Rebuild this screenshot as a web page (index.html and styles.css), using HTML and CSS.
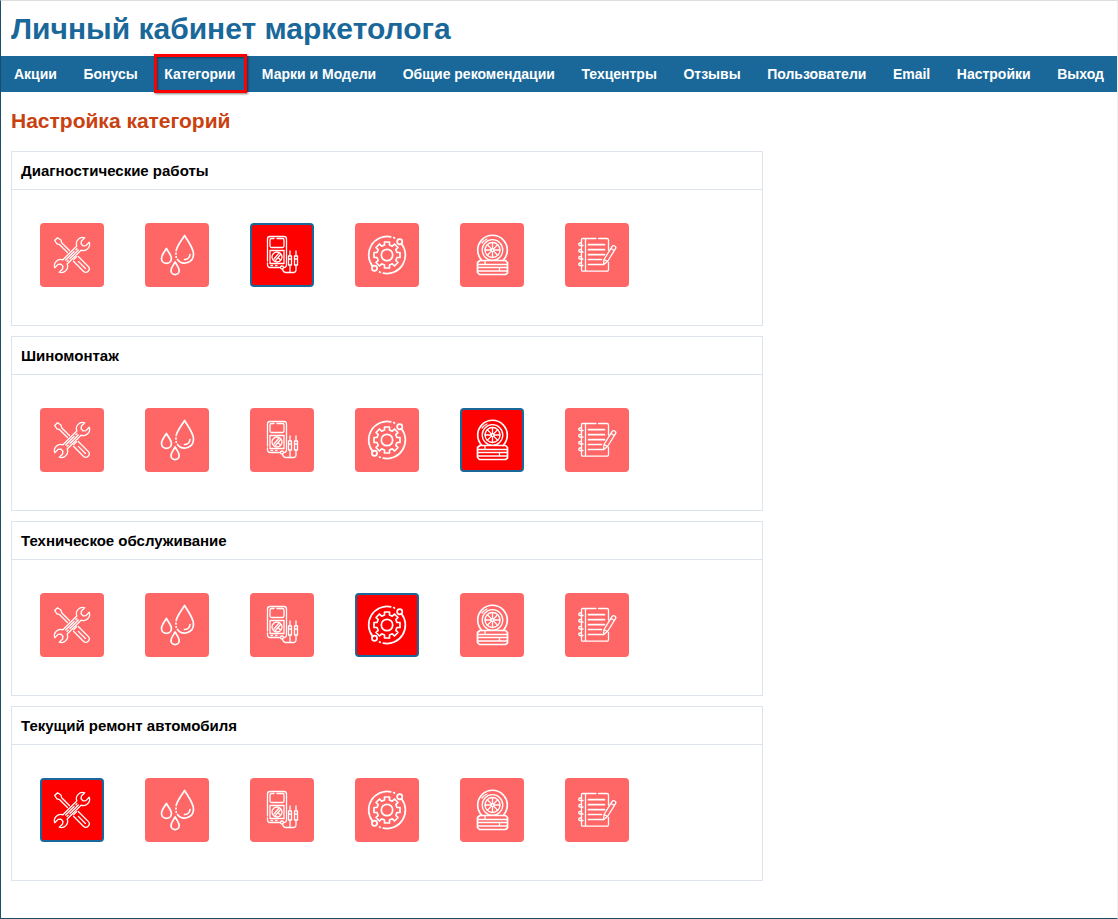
FILE: index.html
```
<!DOCTYPE html>
<html lang="ru">
<head>
<meta charset="utf-8">
<title>Личный кабинет маркетолога</title>
<link rel="stylesheet" href="styles.css">
</head>
<body>
<svg class="sprite" aria-hidden="true">
  <symbol id="tools" viewBox="0 0 64 64">
    <g transform="translate(32 32) rotate(-45)">
      <path d="M-1.400-5V-16L-2.800-18.500L-2-22.500H2L2.800-18.500L1.400-16V-5M-3.400 5.500V19.500A3.400 3.400 0 0 0 3.400 19.500V5.500M-2 4.500H2M0 9V19"/>
    </g>
    <g transform="translate(32 32) rotate(45)">
      <path d="M3-9.800A6.300 6.300 0 0 0 3.200-21.200V-16.500L1.500-14.300H-1.500L-3.200-16.500V-21.200A6.300 6.300 0 0 0-3-9.800V9.800A6.300 6.300 0 0 0-3.200 21.200V16.500L-1.500 14.300H1.500L3.200 16.500V21.200A6.300 6.300 0 0 0 3 9.800Z"/>
      <path d="M-1-8V-6.500M-1-4V8M1-8V4M1 6.500V8"/>
    </g>
  </symbol>
  <symbol id="drops" viewBox="0 0 64 64">
    <g class="bold">
      <path d="M31.200 27.500C32.200 22.500 36.500 17.500 39.600 12.500C43.200 18.500 48.500 25 48.500 31A8.900 8.900 0 0 1 32.500 36.500M31 30V31M31.200 33.500V34.200M45 31.500A5.500 5.500 0 0 1 39.500 36.500"/>
      <path d="M21.400 25.500C19.500 29 16.500 32 16.500 35.400A4.900 4.900 0 0 0 26.400 35.400C26.400 32 23.300 29 21.400 25.500ZM30.100 39C28.500 42 26 44.500 26 47.500A4.100 4.100 0 0 0 34.200 47.500C34.200 44.500 31.700 42 30.100 39Z"/>
    </g>
  </symbol>
  <symbol id="meter" viewBox="0 0 64 64">
    <path d="M17.500 38V16A2.500 2.500 0 0 1 20 13.500H34A2.500 2.500 0 0 1 36.500 16V42A2.500 2.500 0 0 1 34 44.500M30 44.500H20A2.500 2.500 0 0 1 17.500 42V40"/>
    <path d="M27 15.500H32.500A1.500 1.500 0 0 1 34 17V23A1.500 1.500 0 0 1 32.500 24.500H21.500A1.500 1.500 0 0 1 20 23V17A1.500 1.500 0 0 1 21.500 15.500H24M20 27.500H34V40.500H20Z"/>
    <circle cx="27" cy="34" r="5"/>
    <path d="M24 36L29 30M25.500 37.500L30.500 31.500M28.500 35L30.500 37M21 42.500H22.500M25.500 42.500H27"/>
    <circle cx="32" cy="44.500" r="1.500"/>
    <path d="M32.500 46C33 48.500 34 49.500 36 49.500H43.500A2.500 2.500 0 0 0 46 47V42.500M40 49.500V42.500"/>
    <path d="M40 28V33M38.500 33H41.500V42H38.500ZM46 28V33M44.500 33H47.500V42H44.500ZM38.500 36H41.500M44.500 36H47.500"/>
  </symbol>
  <symbol id="gear" viewBox="0 0 64 64">
    <g class="bold">
      <circle cx="32" cy="32" r="5.700"/>
      <path d="M29.500 19H34.500V22L37.300 23.200L39.500 21L43 24.500L40.800 26.700L42 29.500H45V34.500H42L40.800 37.300L43 39.500L39.500 43L37.300 40.800L34.500 42V45H29.500V42L26.700 40.800L24.500 43L21 39.500L23.200 37.300L22 34.500H19V29.500H22L23.200 26.700L21 24.500L24.500 21L26.700 23.200L29.500 22Z"/>
      <circle cx="44.700" cy="18.700" r="2.600"/>
      <circle cx="19.500" cy="45.300" r="2.600"/>
      <path d="M35.700 13.800A18.500 18.500 0 0 0 17.800 43.600M46.500 20.700A18.500 18.500 0 0 1 28.300 50.200M38.700 14.600L39.500 15M24.500 49L25.300 49.300"/>
    </g>
  </symbol>
  <symbol id="tires" viewBox="0 0 64 64">
    <path class="bold" d="M22 37.500A14.800 14.800 0 1 1 43 37.500"/>
    <circle cx="32.500" cy="27" r="10.300"/>
    <circle cx="32.500" cy="27" r="7.500"/>
    <circle cx="32.500" cy="27" r="1.500"/>
    <path d="M32.500 25.500V19.500M32.500 28.500V34.500M31 27H25M34 27H40M31.400 25.900L27.300 21.800M33.600 28.100L37.700 32.200M33.600 25.900L37.700 21.800M31.400 28.100L27.300 32.200M22 20A12.500 12.500 0 0 1 27 16"/>
    <path class="bold" d="M20 37.500H45.500L47.500 39.500V50L45.500 51.500H19.500L17.500 49.500V39.500Z"/>
    <path d="M18 41.500H47M18 44.500H47M18 48H47M25 38V41M39.500 45V48"/>
  </symbol>
  <symbol id="notebook" viewBox="0 0 64 64">
    <path d="M31 15.500H17.500A1 1 0 0 0 16.500 16.500V47A1.200 1.200 0 0 0 17.700 48.200H42A1.500 1.500 0 0 0 43.500 46.700V39.500M43.500 27V17A1.500 1.500 0 0 0 42 15.500H33.500M20.500 15.500V48"/>
    <path d="M18 22.500H15A1.200 1.200 0 0 1 15 20H16.500M18 29H15A1.200 1.200 0 0 1 15 26.500H16.500M18 36H15A1.200 1.200 0 0 1 15 33.500H16.500M18 42.500H15A1.200 1.200 0 0 1 15 40H16.500"/>
    <path class="bold" d="M23.500 21.700H39.500M23.500 26.700H39.500M23.500 31.700H39.500M23.500 36.500H36.500M23.500 41.500H37.500"/>
    <path d="M38.500 41.700L39 36.500L47 23.700A2 2 0 0 1 50.500 25.700L42.500 38.500ZM39 36.500L42.500 38.500M46 25.500L49.300 27.500"/>
  </symbol>
</svg>

<div class="page">
  <header>
    <h1 class="title">Личный кабинет маркетолога</h1>
    <nav class="nav">
      <a href="#">Акции</a>
      <a href="#">Бонусы</a>
      <a href="#" class="current" aria-current="page">Категории</a>
      <a href="#">Марки и Модели</a>
      <a href="#">Общие рекомендации</a>
      <a href="#">Техцентры</a>
      <a href="#">Отзывы</a>
      <a href="#">Пользователи</a>
      <a href="#">Email</a>
      <a href="#">Настройки</a>
      <a href="#">Выход</a>
    </nav>
  </header>
  <main class="content">
    <h2 class="subtitle">Настройка категорий</h2>
    <section class="card">
      <h3 class="card-title">Диагностические работы</h3>
      <div class="icons">
        <button class="tile" aria-label="Инструменты"><svg><use href="#tools"/></svg></button>
        <button class="tile" aria-label="Жидкости"><svg><use href="#drops"/></svg></button>
        <button class="tile selected" aria-label="Тестер" aria-pressed="true"><svg><use href="#meter"/></svg></button>
        <button class="tile" aria-label="Шестерня"><svg><use href="#gear"/></svg></button>
        <button class="tile" aria-label="Шины"><svg><use href="#tires"/></svg></button>
        <button class="tile" aria-label="Блокнот"><svg><use href="#notebook"/></svg></button>
      </div>
    </section>
    <section class="card">
      <h3 class="card-title">Шиномонтаж</h3>
      <div class="icons">
        <button class="tile" aria-label="Инструменты"><svg><use href="#tools"/></svg></button>
        <button class="tile" aria-label="Жидкости"><svg><use href="#drops"/></svg></button>
        <button class="tile" aria-label="Тестер"><svg><use href="#meter"/></svg></button>
        <button class="tile" aria-label="Шестерня"><svg><use href="#gear"/></svg></button>
        <button class="tile selected" aria-label="Шины" aria-pressed="true"><svg><use href="#tires"/></svg></button>
        <button class="tile" aria-label="Блокнот"><svg><use href="#notebook"/></svg></button>
      </div>
    </section>
    <section class="card">
      <h3 class="card-title">Техническое обслуживание</h3>
      <div class="icons">
        <button class="tile" aria-label="Инструменты"><svg><use href="#tools"/></svg></button>
        <button class="tile" aria-label="Жидкости"><svg><use href="#drops"/></svg></button>
        <button class="tile" aria-label="Тестер"><svg><use href="#meter"/></svg></button>
        <button class="tile selected" aria-label="Шестерня" aria-pressed="true"><svg><use href="#gear"/></svg></button>
        <button class="tile" aria-label="Шины"><svg><use href="#tires"/></svg></button>
        <button class="tile" aria-label="Блокнот"><svg><use href="#notebook"/></svg></button>
      </div>
    </section>
    <section class="card">
      <h3 class="card-title">Текущий ремонт автомобиля</h3>
      <div class="icons">
        <button class="tile selected" aria-label="Инструменты" aria-pressed="true"><svg><use href="#tools"/></svg></button>
        <button class="tile" aria-label="Жидкости"><svg><use href="#drops"/></svg></button>
        <button class="tile" aria-label="Тестер"><svg><use href="#meter"/></svg></button>
        <button class="tile" aria-label="Шестерня"><svg><use href="#gear"/></svg></button>
        <button class="tile" aria-label="Шины"><svg><use href="#tires"/></svg></button>
        <button class="tile" aria-label="Блокнот"><svg><use href="#notebook"/></svg></button>
      </div>
    </section>
  </main>
</div>
</body>
</html>
```

FILE: styles.css
```
* {
  box-sizing: border-box;
}

body {
  margin: 0;
  background: #fff;
  color: #000;
  font-family: "Liberation Sans", Arial, sans-serif;
}

.sprite {
  display: none;
}

.page {
  min-height: 100vh;
  border: 1px solid #1a4f6c;
  border-top-color: #ddd;
  border-right-color: #eee;
}

.title {
  margin: 0;
  padding: 10px 10px 9px;
  color: #1a6899;
  font-size: 30px;
  line-height: 36px;
}

.nav {
  display: flex;
  justify-content: space-between;
  background: #1a6899;
}

.nav a {
  position: relative;
  padding: 0 13px;
  color: #fff;
  font-size: 14px;
  font-weight: bold;
  line-height: 36px;
  text-decoration: none;
  white-space: nowrap;
}

.nav .current::after {
  content: "";
  position: absolute;
  inset: -2px 1px -1px 3px;
  border: 3px solid #f00;
  box-shadow: 1px 1px 2px rgba(0, 0, 0, 0.5), inset 1px 1px 2px rgba(0, 0, 0, 0.4);
}

.content {
  padding: 16px 10px;
}

.subtitle {
  margin: 0 0 17px;
  color: #c9410f;
  font-size: 21px;
  line-height: 26px;
}

.card {
  max-width: 752px;
  margin-bottom: 10px;
  border: 1px solid #dde4ed;
}

.card-title {
  margin: 0;
  padding: 0 9px;
  border-bottom: 1px solid #dde4ed;
  font-size: 15px;
  line-height: 37px;
}

.icons {
  display: flex;
  flex-wrap: wrap;
  gap: 41px;
  padding: 33px 28px 38px;
}

.tile {
  display: grid;
  place-content: center;
  width: 64px;
  height: 64px;
  padding: 0;
  border: 0;
  border-radius: 4px;
  background: #f66;
  cursor: pointer;
}

.tile.selected {
  border: 2px solid #1a6899;
  background: #f00;
}

.tile svg {
  width: 64px;
  height: 64px;
  fill: none;
  stroke: #fff;
  stroke-width: 1.3px;
  stroke-linecap: round;
  stroke-linejoin: round;
}

.bold {
  stroke-width: 1.7px;
}
```
